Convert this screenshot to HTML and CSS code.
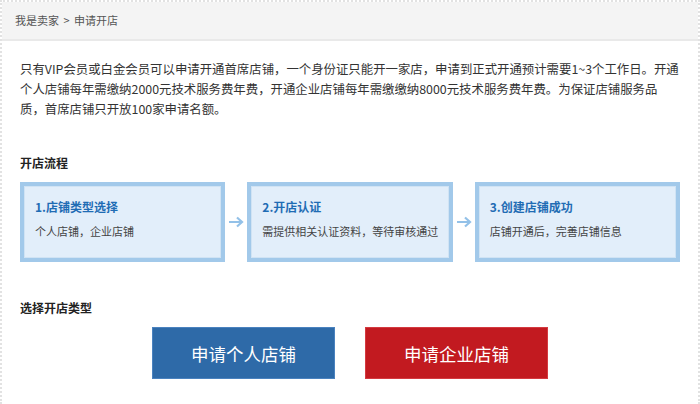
FILE: index.html
```html
<!DOCTYPE html>
<html lang="zh-CN">
<head>
<meta charset="utf-8">
<title>申请开店</title>
<link rel="stylesheet" href="styles.css">
</head>
<body>
<div class="page">
  <div class="crumb">我是卖家 &gt; 申请开店</div>
  <div class="content">
    <p class="intro">只有VIP会员或白金会员可以申请开通首席店铺，一个身份证只能开一家店，申请到正式开通预计需要1~3个工作日。开通<br>个人店铺每年需缴纳2000元技术服务费年费，开通企业店铺每年需缴缴纳8000元技术服务费年费。为保证店铺服务品<br>质，首席店铺只开放100家申请名额。</p>

    <h3 class="title">开店流程</h3>
    <div class="steps">
      <div class="step">
        <div class="step-name">1.店铺类型选择</div>
        <div class="step-desc">个人店铺，企业店铺</div>
      </div>
      <div class="arrow"><svg width="16" height="12" viewBox="0 0 16 12"><path d="M1 6H14M9 1.5L14 6L9 10.5" fill="none" stroke="#93c1e8" stroke-width="2.2"/></svg></div>
      <div class="step">
        <div class="step-name">2.开店认证</div>
        <div class="step-desc">需提供相关认证资料，等待审核通过</div>
      </div>
      <div class="arrow"><svg width="16" height="12" viewBox="0 0 16 12"><path d="M1 6H14M9 1.5L14 6L9 10.5" fill="none" stroke="#93c1e8" stroke-width="2.2"/></svg></div>
      <div class="step">
        <div class="step-name">3.创建店铺成功</div>
        <div class="step-desc">店铺开通后，完善店铺信息</div>
      </div>
    </div>

    <h3 class="title type-title">选择开店类型</h3>
    <div class="buttons">
      <a class="btn btn-blue" href="#">申请个人店铺</a>
      <a class="btn btn-red" href="#">申请企业店铺</a>
    </div>
  </div>
</div>
</body>
</html>
```

FILE: styles.css
```css
html, body {
  margin: 0;
  padding: 0;
  background: #fff;
}
body {
  font-family: "Noto Sans CJK SC", "Noto Sans", sans-serif;
  color: #333;
}
.page {
  width: 700px;
  height: 404px;
  box-sizing: border-box;
  border: 2px dotted #e2e2e2;
  border-bottom: none;
  overflow: hidden;
}
.crumb {
  height: 37px;
  line-height: 37px;
  padding-left: 13px;
  font-size: 11px;
  word-spacing: 2px;
  color: #555;
  background: #f4f4f4;
  border-bottom: 2px solid #e9e9e9;
}
.content {
  padding: 0 18px;
}
.intro {
  margin: 18px 0 0;
  font-size: 12.4px;
  line-height: 20px;
  white-space: nowrap;
  color: #333;
}
.title {
  margin: 34px 0 0;
  font-size: 12px;
  line-height: 20px;
  font-weight: bold;
  color: #222;
}
.steps {
  display: flex;
  align-items: center;
  margin-top: 9px;
}
.step {
  flex: 1;
  min-width: 0;
  height: 80px;
  box-sizing: border-box;
  border: 4px solid #a2c9ea;
  box-shadow: inset 0 0 0 1px #d0e3f4;
  background: #e2eefa;
  padding: 13px 6px 0 11px;
  white-space: nowrap;
}
.step-name {
  font-size: 12px;
  font-weight: bold;
  line-height: 16px;
  color: #1f6cb4;
}
.step-desc {
  margin-top: 8px;
  font-size: 11px;
  line-height: 16px;
  color: #444;
}
.arrow {
  width: 22px;
  display: flex;
  justify-content: center;
}
.arrow svg {
  display: block;
}
.type-title {
  margin-top: 36px;
}
.buttons {
  display: flex;
  justify-content: center;
  gap: 30px;
  margin-top: 9px;
}
.btn {
  width: 183px;
  height: 52px;
  box-sizing: border-box;
  display: flex;
  align-items: center;
  justify-content: center;
  font-size: 17.5px;
  color: #fff;
  text-decoration: none;
}
.btn-blue {
  background: #2e6aa8;
  border: 1px solid #4a82bf;
}
.btn-red {
  background: #c21a20;
  border: 1px solid #d43a40;
}
```
